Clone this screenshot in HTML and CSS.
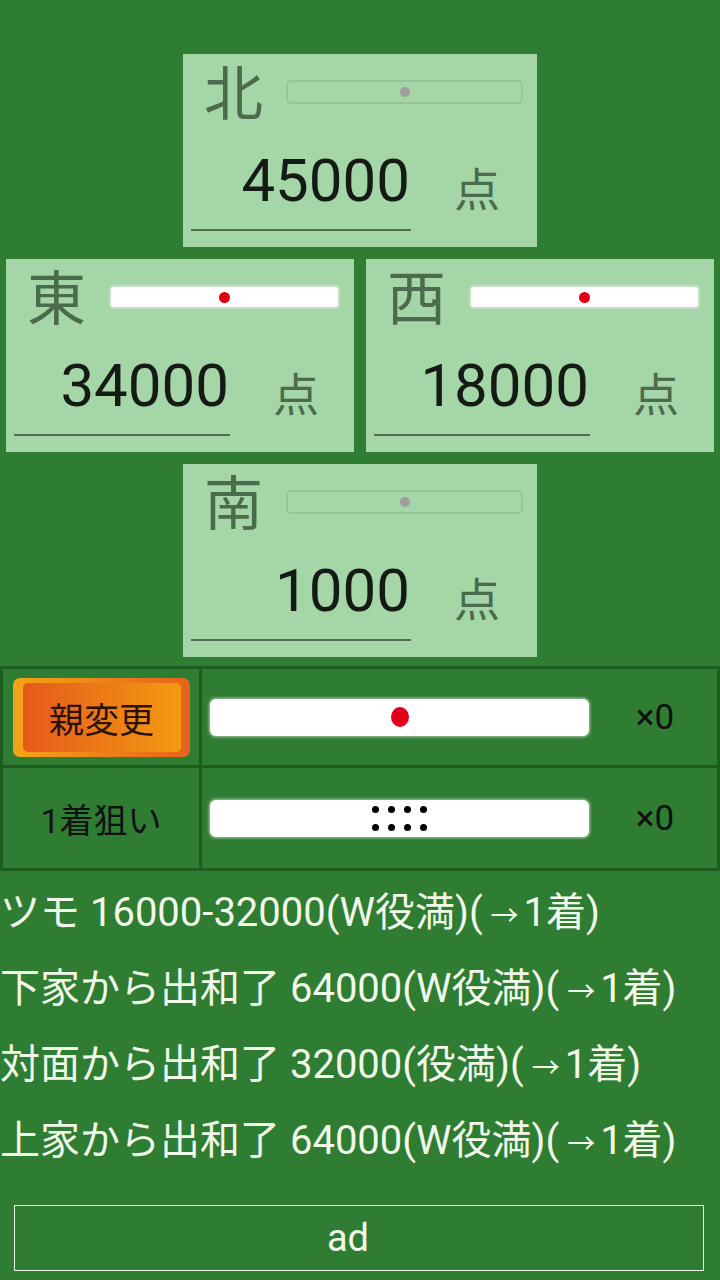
FILE: index.html
```html
<!doctype html>
<html lang="ja">
<head>
<meta charset="utf-8">
<title>点数計算</title>
<link rel="stylesheet" href="styles.css">
</head>
<body>

<div class="board">
  <!-- 北 -->
  <div class="seat">
    <div class="seat-head">
      <span class="wind">北</span>
      <div class="stick stick-off"><span class="pin"></span></div>
    </div>
    <div class="seat-body">
      <span class="score">45000</span>
      <span class="unit">点</span>
    </div>
  </div>

  <div class="seat-row">
    <!-- 東 -->
    <div class="seat">
      <div class="seat-head">
        <span class="wind">東</span>
        <div class="stick"><span class="pin"></span></div>
      </div>
      <div class="seat-body">
        <span class="score">34000</span>
        <span class="unit">点</span>
      </div>
    </div>
    <!-- 西 -->
    <div class="seat">
      <div class="seat-head">
        <span class="wind">西</span>
        <div class="stick"><span class="pin"></span></div>
      </div>
      <div class="seat-body">
        <span class="score">18000</span>
        <span class="unit">点</span>
      </div>
    </div>
  </div>

  <!-- 南 -->
  <div class="seat">
    <div class="seat-head">
      <span class="wind">南</span>
      <div class="stick stick-off"><span class="pin"></span></div>
    </div>
    <div class="seat-body">
      <span class="score">1000</span>
      <span class="unit">点</span>
    </div>
  </div>
</div>

<div class="table">
  <div class="cell">
    <div class="oya"><span>親変更</span></div>
  </div>
  <div class="cell stick-cell">
    <div class="tray"><span class="red-dot"></span></div>
    <span class="count">×0</span>
  </div>
  <div class="cell">
    <span class="label">1着狙い</span>
  </div>
  <div class="cell stick-cell">
    <div class="tray">
      <div class="dots">
        <span></span><span></span><span></span><span></span>
        <span></span><span></span><span></span><span></span>
      </div>
    </div>
    <span class="count">×0</span>
  </div>
</div>

<div class="results">
  <p>ツモ 16000-32000(W役満)(<span class="arrow">→</span>1着)</p>
  <p>下家から出和了 64000(W役満)(<span class="arrow">→</span>1着)</p>
  <p>対面から出和了 32000(役満)(<span class="arrow">→</span>1着)</p>
  <p>上家から出和了 64000(W役満)(<span class="arrow">→</span>1着)</p>
</div>

<div class="ad">ad</div>

</body>
</html>
```

FILE: styles.css
```css
body {
  margin: 0;
  background-color: #2e7d32;
  font-family: Roboto, "Noto Sans CJK JP", sans-serif;
}

/* seats */
.board {
  display: flex;
  flex-direction: column;
  align-items: center;
  gap: 12px;
  padding-top: 54px;
}
.seat-row {
  display: flex;
  gap: 12px;
}
.seat {
  box-sizing: border-box;
  width: 354px;
  height: 193px;
  padding: 0 14px 0 8px;
  background-color: #a5d6a7;
}
.seat-row .seat {
  width: 348px;
}
.seat-head {
  display: flex;
  align-items: center;
  height: 80px;
}
.wind {
  width: 58px;
  margin-left: 13px;
  font-size: 59px;
  line-height: 1;
  color: #4a6b4c;
}
.stick {
  flex: 1;
  box-sizing: border-box;
  height: 24px;
  margin: 0 0 4px 24px;
  display: flex;
  align-items: center;
  justify-content: center;
  border: 2px solid #c9dcc9;
  border-radius: 5px;
  background-color: #ffffff;
}
.stick .pin {
  width: 11px;
  height: 11px;
  border-radius: 50%;
  background-color: #e00010;
}
.stick-off {
  border-color: #96c598;
  background-color: transparent;
}
.stick-off .pin {
  width: 10px;
  height: 10px;
  background-color: #9e9e9e;
}
.seat-body {
  display: flex;
  align-items: flex-start;
  margin-top: 17px;
}
.score {
  box-sizing: border-box;
  width: 220px;
  padding: 0 1px 18px 0;
  border-bottom: 2px solid #4d6e4f;
  font-size: 60px;
  line-height: 60px;
  text-align: right;
  color: #141a14;
}
.seat-row .score {
  width: 216px;
}
.unit {
  margin: 16px 0 0 43px;
  font-size: 46px;
  line-height: 1;
  color: #4a6b4c;
}

/* stick table */
.table {
  display: grid;
  grid-template-columns: 196px 1fr;
  grid-template-rows: 96px 100px;
  gap: 3px;
  margin-top: 9px;
  border: 3px solid #1d5e20;
  background-color: #1d5e20;
}
.cell {
  display: flex;
  align-items: center;
  justify-content: center;
  background-color: #2e7d32;
}
.oya {
  box-sizing: border-box;
  width: 177px;
  height: 79px;
  padding: 5px 9px 5px 10px;
  border-radius: 7px;
  background: linear-gradient(to right, #f4a416, #e8621a);
}
.oya span {
  display: flex;
  align-items: center;
  justify-content: center;
  height: 100%;
  border-radius: 5px;
  background: linear-gradient(to right, #e55a1b, #f39a12);
  font-size: 35px;
  color: #2b1204;
}
.label {
  font-size: 34px;
  color: #111111;
}
.stick-cell {
  justify-content: flex-start;
  padding-left: 8px;
}
.tray {
  width: 379px;
  height: 37px;
  display: flex;
  align-items: center;
  justify-content: center;
  border-radius: 6px;
  background-color: #ffffff;
  box-shadow: 0 0 3px 1px rgba(255, 255, 255, 0.6);
}
.red-dot {
  width: 18px;
  height: 20px;
  border-radius: 50%;
  background-color: #e3001b;
}
.dots {
  display: grid;
  grid-template-columns: repeat(4, 7px);
  gap: 11px 9px;
}
.dots span {
  width: 7px;
  height: 7px;
  border-radius: 50%;
  background-color: #000000;
}
.count {
  flex: 1;
  padding-left: 4px;
  text-align: center;
  font-size: 35px;
  color: #111111;
}

/* results */
.results {
  margin-top: 4px;
  font-size: 40px;
  line-height: 76px;
  color: #f1f8e9;
}
.results p {
  height: 76px;
  margin: 0;
  white-space: nowrap;
}
.arrow {
  margin: 0 5px 0 8px;
  font-size: 28px;
  line-height: 0;
}

.ad {
  box-sizing: border-box;
  width: 690px;
  height: 66px;
  margin: 26px 0 0 14px;
  padding-right: 22px;
  display: flex;
  align-items: center;
  justify-content: center;
  border: 1.5px solid #e8f5e9;
  font-size: 38px;
  color: #f1f8e9;
}
```
